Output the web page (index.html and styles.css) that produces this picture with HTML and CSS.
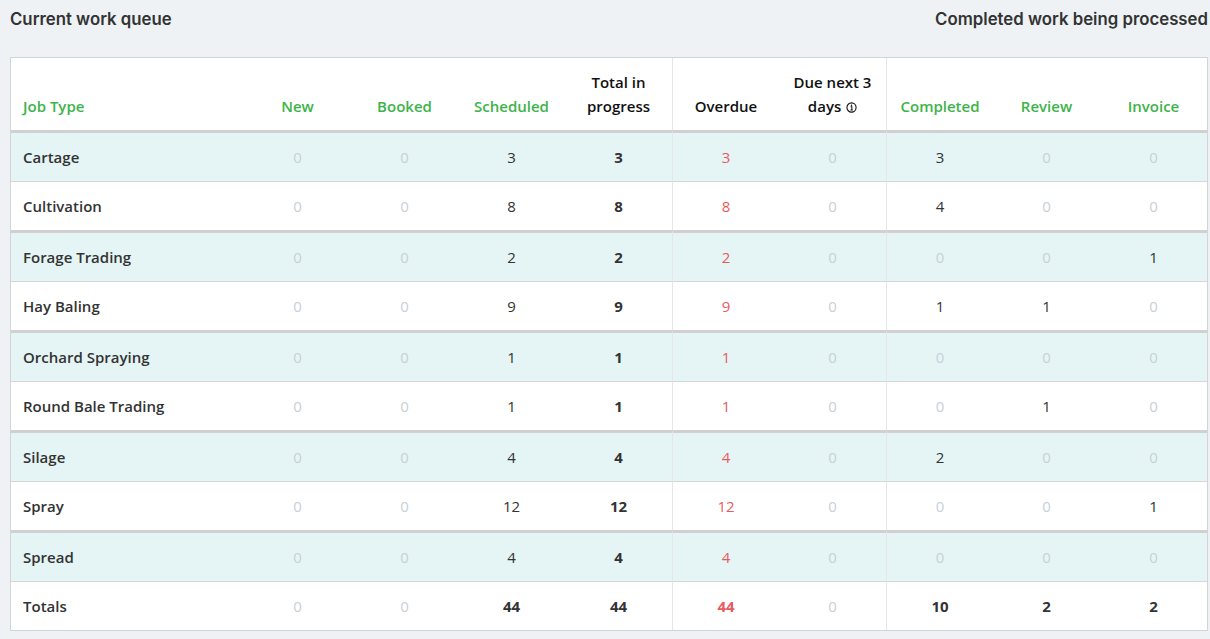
FILE: index.html
```html
<!DOCTYPE html>
<html lang="en">
<head>
<meta charset="utf-8">
<title>Work queue</title>
<link rel="stylesheet" href="styles.css">
</head>
<body>
<div class="page">
  <div class="titles">
    <h2 class="title">Current work queue</h2>
    <h2 class="title">Completed work being processed</h2>
  </div>
  <table class="queue">
    <colgroup>
      <col class="c-type">
      <col class="c-num"><col class="c-num"><col class="c-num"><col class="c-num">
      <col class="c-num"><col class="c-num">
      <col class="c-num"><col class="c-num"><col class="c-num">
    </colgroup>
    <thead>
      <tr>
        <th class="type green">Job Type</th>
        <th class="green">New</th>
        <th class="green">Booked</th>
        <th class="green">Scheduled</th>
        <th class="dark">Total in<br>progress</th>
        <th class="dark sep">Overdue</th>
        <th class="dark">Due next 3<br>days <svg class="info" viewBox="0 0 12 12" width="11" height="11"><circle cx="6" cy="6" r="5" fill="none" stroke="#111" stroke-width="1.2"/><circle cx="6" cy="3.6" r="0.8" fill="#111"/><path d="M5 5.3h1.4v3.3M4.8 8.6h2.6" fill="none" stroke="#111" stroke-width="1.1"/></svg></th>
        <th class="green sep">Completed</th>
        <th class="green">Review</th>
        <th class="green">Invoice</th>
      </tr>
    </thead>
    <tbody>
      <tr class="alt">
        <td class="type">Cartage</td>
        <td class="zero">0</td><td class="zero">0</td><td>3</td><td class="bold">3</td>
        <td class="red sep">3</td><td class="zero">0</td>
        <td class="sep">3</td><td class="zero">0</td><td class="zero">0</td>
      </tr>
      <tr>
        <td class="type">Cultivation</td>
        <td class="zero">0</td><td class="zero">0</td><td>8</td><td class="bold">8</td>
        <td class="red sep">8</td><td class="zero">0</td>
        <td class="sep">4</td><td class="zero">0</td><td class="zero">0</td>
      </tr>
      <tr class="alt">
        <td class="type">Forage Trading</td>
        <td class="zero">0</td><td class="zero">0</td><td>2</td><td class="bold">2</td>
        <td class="red sep">2</td><td class="zero">0</td>
        <td class="zero sep">0</td><td class="zero">0</td><td>1</td>
      </tr>
      <tr>
        <td class="type">Hay Baling</td>
        <td class="zero">0</td><td class="zero">0</td><td>9</td><td class="bold">9</td>
        <td class="red sep">9</td><td class="zero">0</td>
        <td class="sep">1</td><td>1</td><td class="zero">0</td>
      </tr>
      <tr class="alt">
        <td class="type">Orchard Spraying</td>
        <td class="zero">0</td><td class="zero">0</td><td>1</td><td class="bold">1</td>
        <td class="red sep">1</td><td class="zero">0</td>
        <td class="zero sep">0</td><td class="zero">0</td><td class="zero">0</td>
      </tr>
      <tr>
        <td class="type">Round Bale Trading</td>
        <td class="zero">0</td><td class="zero">0</td><td>1</td><td class="bold">1</td>
        <td class="red sep">1</td><td class="zero">0</td>
        <td class="zero sep">0</td><td>1</td><td class="zero">0</td>
      </tr>
      <tr class="alt">
        <td class="type">Silage</td>
        <td class="zero">0</td><td class="zero">0</td><td>4</td><td class="bold">4</td>
        <td class="red sep">4</td><td class="zero">0</td>
        <td class="sep">2</td><td class="zero">0</td><td class="zero">0</td>
      </tr>
      <tr>
        <td class="type">Spray</td>
        <td class="zero">0</td><td class="zero">0</td><td>12</td><td class="bold">12</td>
        <td class="red sep">12</td><td class="zero">0</td>
        <td class="zero sep">0</td><td class="zero">0</td><td>1</td>
      </tr>
      <tr class="alt">
        <td class="type">Spread</td>
        <td class="zero">0</td><td class="zero">0</td><td>4</td><td class="bold">4</td>
        <td class="red sep">4</td><td class="zero">0</td>
        <td class="zero sep">0</td><td class="zero">0</td><td class="zero">0</td>
      </tr>
      <tr class="totals">
        <td class="type">Totals</td>
        <td class="zero">0</td><td class="zero">0</td><td class="bold">44</td><td class="bold">44</td>
        <td class="red bold sep">44</td><td class="zero">0</td>
        <td class="bold sep">10</td><td class="bold">2</td><td class="bold">2</td>
      </tr>
    </tbody>
  </table>
</div>
</body>
</html>
```

FILE: styles.css
```css
* { box-sizing: border-box; }
html, body { margin: 0; padding: 0; }
body {
  background: #eef2f5;
  font-family: "Open Sans", "Noto Sans", "Liberation Sans", sans-serif;
  color: #333;
}
.page {
  padding: 0 2px 0 10px;
}
.titles {
  display: flex;
  justify-content: space-between;
  align-items: center;
  height: 38px;
  margin-bottom: 19px;
}
.title {
  margin: 0;
  font-family: "Inter", "Open Sans", sans-serif;
  font-size: 16.8px;
  font-weight: 600;
  color: #333;
}
.queue {
  width: 1198px;
  table-layout: fixed;
  border-collapse: separate;
  border-spacing: 0;
  background: #fff;
  border: 1px solid #d4d4d4;
  font-size: 15px;
}
.c-type { width: 233px; }
.c-num { width: 107px; }
.queue th, .queue td {
  padding: 12px 6px;
  line-height: 24px;
  text-align: center;
}
.queue th {
  vertical-align: bottom;
  font-weight: 600;
}
.queue .type {
  text-align: left;
  padding-left: 12px;
  font-weight: 600;
  color: #333;
}
.queue th.type { color: #3db34a; }
.green { color: #3db34a; }
.dark { color: #111; }
.sep { border-left: 1px solid #e6e6e6; }
.info { vertical-align: -1px; margin-left: 1px; }
.queue tr.alt td {
  background: #e5f5f5;
  border-top: 3px solid #d0d0d0;
  border-bottom: 1px solid #d6d6d6;
}
.queue td { color: #333; }
.queue td.zero { color: #c8d0d8; }
.queue td.red { color: #e85a5e; }
.queue td.bold { font-weight: 700; }
```
